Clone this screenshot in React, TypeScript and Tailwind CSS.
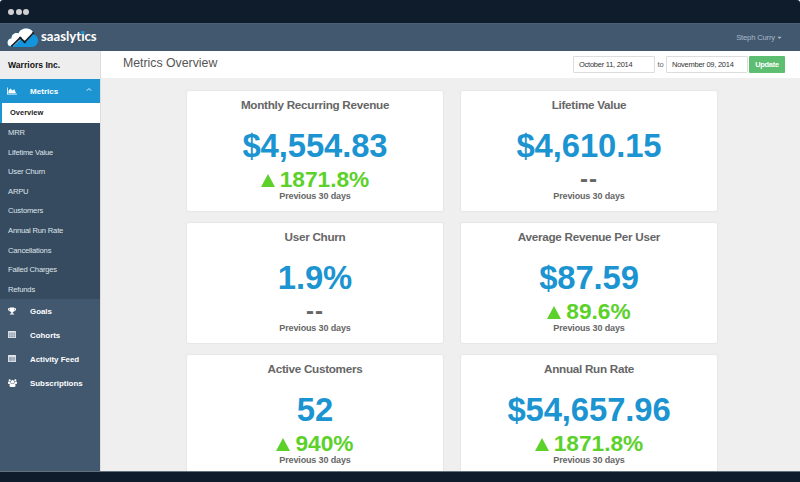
import type { ReactNode } from "react";
import { FaTrophy, FaCaretDown } from "react-icons/fa";

type Metric = { title: string; value: string; change?: string };

const metrics: Metric[] = [
  { title: "Monthly Recurring Revenue", value: "$4,554.83", change: "1871.8%" },
  { title: "Lifetime Value", value: "$4,610.15" },
  { title: "User Churn", value: "1.9%" },
  { title: "Average Revenue Per User", value: "$87.59", change: "89.6%" },
  { title: "Active Customers", value: "52", change: "940%" },
  { title: "Annual Run Rate", value: "$54,657.96", change: "1871.8%" },
];

const subItems = ["MRR", "Lifetime Value", "User Churn", "ARPU", "Customers", "Annual Run Rate", "Cancellations", "Failed Charges", "Refunds"];

function Logo() {
  return (
    <svg className="h-5 w-8 shrink-0" viewBox="0 0 32 20">
      <path d="M4 19a4 4 0 0 1-3.500-4.500c.2-2.500 1.800-4 4-4C4.500 6.500 8 4 11.500 5.500 13 1.500 16.500.2 20 .5c4 .4 6 2.500 6.300 6C30 7.500 31.600 10 31 13.500c-.7 3.500-3 5.500-6.500 5.500z" fill="#1295dc" />
      <path d="M1.500 17.500C-.5 14 1 10.600 4.500 10.500 4.500 6.500 8 4 11.500 5.500 13 1.500 16.500.2 20 .5c3.500.3 5.800 2 6.300 5L18.500 14.500 14 11 6 18.500z" fill="#fff" />
      <path d="M5 17.800 13.200 9.800 17.700 14.200 26.200 5" fill="none" stroke="#17202c" strokeWidth="1.700" />
      <circle cx="5" cy="17.800" r="1.100" fill="#17202c" />
      <circle cx="13.200" cy="10" r="1.300" fill="#17202c" />
      <circle cx="17.700" cy="14" r="1.200" fill="#17202c" />
      <circle cx="26.200" cy="5" r="1.100" fill="#17202c" />
    </svg>
  );
}

function AreaIcon() {
  return (
    <svg className="h-2 w-[10px]" viewBox="0 0 10 8" fill="#fff">
      <path d="M0 .5h.8v6.200H10v.8H0z" />
      <path d="M1.400 6.200V4L3.300 1.500 5.400 3.400 7.300 2.200 9 6.200z" />
    </svg>
  );
}

function TableIcon() {
  return (
    <svg className="h-[7px] w-2" viewBox="0 0 8 7">
      <rect width="8" height="7" rx=".6" fill="#e3e8ec" />
      <path d="M.8 1.600h6.400v4.600H.8z" fill="#8f9eae" />
      <path d="M.8 3.100h6.400M.8 4.700h6.400M2.800 1.600v4.600M5.200 1.600v4.600" stroke="#d5dbe2" strokeWidth=".5" />
    </svg>
  );
}

function ListIcon() {
  return (
    <svg className="h-[7px] w-2" viewBox="0 0 8 7">
      <rect width="8" height="7" rx=".6" fill="#e8ecf0" />
      <path d="M.8 1.800h6.400v4.400H.8z" fill="#8797a8" />
      <path d="M1.200 2.700h.8M2.600 2.700h4.200M1.200 4h.8M2.600 4h4.200M1.200 5.300h.8M2.600 5.300h4.200" stroke="#dce2e8" strokeWidth=".6" />
    </svg>
  );
}

function GroupIcon() {
  return (
    <svg className="h-2 w-[9px]" viewBox="0 0 9 8" fill="#fff">
      <circle cx="1.700" cy="1.300" r="1.100" />
      <circle cx="7.300" cy="1.300" r="1.100" />
      <circle cx="4.500" cy="2.700" r="1.700" />
      <path d="M0 4.800V3.400Q.1 2.300 1 2.500q.8.500 1.500.1Q2.300 4 3 4.500L1.600 5zM9 4.800V3.400Q8.900 2.300 8 2.500q-.8.500-1.500.1Q6.700 4 6 4.500L7.400 5z" />
      <path d="M1.500 7.100Q1.400 4.200 3 4.200q1.500 1 3 0 1.600 0 1.500 2.900-.1.800-1 .8h-4q-.9 0-1-.8z" />
    </svg>
  );
}

function NavItem({ icon, label }: { icon: ReactNode; label: string }) {
  return (
    <div className="flex h-[24.1px] items-center pl-2 text-[7.900px] font-bold text-white">
      <span className="flex w-[22px] items-center pb-px">{icon}</span>
      <span className="pt-px">{label}</span>
    </div>
  );
}

function Card({ title, value, change }: Metric) {
  return (
    <div className="flex h-[120px] w-64 flex-col items-center rounded-[2px] bg-white pt-[6px] font-bold whitespace-nowrap text-[#666] shadow-[0_0_2px_rgba(0,0,0,0.13)]">
      <div className="h-[30px] text-[11.700px] leading-[15px] tracking-[-0.28px]">{title}</div>
      <div className="h-[41px] text-[32.800px] leading-[38px] tracking-[-0.1px] text-[#1b94d1]">{value}</div>
      {change ? (
        <div className="flex h-[23px] items-center text-[22.700px] leading-[23px] text-[#5bd12a]">
          <svg className="mt-[2px] mr-[5px] h-[13px] w-[14px]" viewBox="0 0 14 13"><path d="M7 0 14 13H0z" fill="currentColor" /></svg>
          {change}
        </div>
      ) : (
        <div className="h-[23px] text-[24px] leading-[22px] tracking-[1px]">--</div>
      )}
      <div className="text-[9px] leading-[11px] tracking-[-0.13px]">Previous 30 days</div>
    </div>
  );
}

export default function App() {
  return (
    <div className="flex h-[482px] w-[800px] flex-col overflow-hidden bg-white font-['Liberation_Sans',Arial,sans-serif]">
      <div className="flex h-[23px] shrink-0 items-center gap-[1.700px] rounded-t-[3px] bg-[#0f1c2b] pl-2 pt-px">
        <span className="size-[6px] rounded-full bg-[#d0d1d4]" />
        <span className="size-[6px] rounded-full bg-[#d0d1d4]" />
        <span className="size-[6px] rounded-full bg-[#d0d1d4]" />
      </div>
      <header className="flex h-7 shrink-0 items-center border-t border-[#4a6077] bg-[#42586f] pr-[17px] pl-[7px]">
        <Logo />
        <span className="ml-[2px] pb-[3px] font-['Lato',sans-serif] text-[13.200px] leading-4 font-bold text-white [font-variant-ligatures:none]">
          saaslyt
          <span className="relative inline-block">
            i<span className="absolute top-[3px] left-0 h-[3px] w-[3px] bg-[#1295dc]" />
          </span>
          cs
        </span>
        <span className="ml-auto flex items-center text-[7.600px] tracking-[-0.15px] text-[#a9b9c9]">
          Steph Curry<FaCaretDown className="ml-px size-[7px]" />
        </span>
      </header>
      <div className="flex min-h-0 flex-1">
        <aside className="flex w-[100px] shrink-0 flex-col bg-[#42586f]">
          <div className="flex h-7 shrink-0 items-center bg-[#eee] pl-2 text-[8.600px] font-bold text-[#111]">Warriors Inc.</div>
          <div className="flex h-6 shrink-0 items-center bg-[#1b94d1] pr-2 pl-[7px] text-[8.100px] font-bold text-white">
            <span className="w-[23px]"><AreaIcon /></span>
            <span className="pt-[2px]">Metrics</span>
            <svg className="mb-1 ml-auto h-[3px] w-[6px]" viewBox="0 0 6 3"><path d="M.5 2.800 3 .6 5.500 2.800" fill="none" stroke="#fff" strokeWidth=".8" /></svg>
          </div>
          <div className="flex h-5 shrink-0 items-center border-l-2 border-[#1b94d1] bg-white pl-[8px] text-[7.500px] font-bold text-[#222]">Overview</div>
          <div className="h-[176px] shrink-0 bg-[#364b60]">
            {subItems.map((item) => (
              <div key={item} className="flex h-[19.600px] items-center pl-2 text-[7.600px] tracking-[-0.18px] text-[#dfe5eb]">{item}</div>
            ))}
          </div>
          <NavItem icon={<FaTrophy className="size-2" />} label="Goals" />
          <NavItem icon={<TableIcon />} label="Cohorts" />
          <NavItem icon={<ListIcon />} label="Activity Feed" />
          <NavItem icon={<GroupIcon />} label="Subscriptions" />
        </aside>
        <main className="flex min-w-0 flex-1 flex-col overflow-hidden border-l border-[#ddd] bg-[#efefef]">
          <div className="flex h-[27px] shrink-0 items-center bg-white pr-[15px] pl-[22px]">
            <h1 className="pb-[2px] text-[12.300px] text-[#555]">Metrics Overview</h1>
            <div className="ml-auto flex items-center text-[7.500px] tracking-[-0.25px] text-[#333]">
              <div className="flex h-[17px] w-[82px] items-center rounded-[1px] border border-[#ddd] pl-[5px]">October 11, 2014</div>
              <span className="w-[11px] text-center text-[#666]">to</span>
              <div className="flex h-[17px] w-[82px] items-center rounded-[1px] border border-[#ddd] pl-[5px]">November 09, 2014</div>
              <button className="ml-px h-[17px] w-9 rounded-[1px] bg-[#5dbd70] text-[7.400px] font-bold text-white">Update</button>
            </div>
          </div>
          <div className="grid grid-cols-[256px_256px] gap-x-[18px] gap-y-3 pt-[13px] pl-[86px]">
            {metrics.map((m) => (
              <Card key={m.title} {...m} />
            ))}
          </div>
        </main>
      </div>
      <footer className="h-[11px] shrink-0 border-t border-[#63717c] bg-[#0f1c2b]" />
    </div>
  );
}
